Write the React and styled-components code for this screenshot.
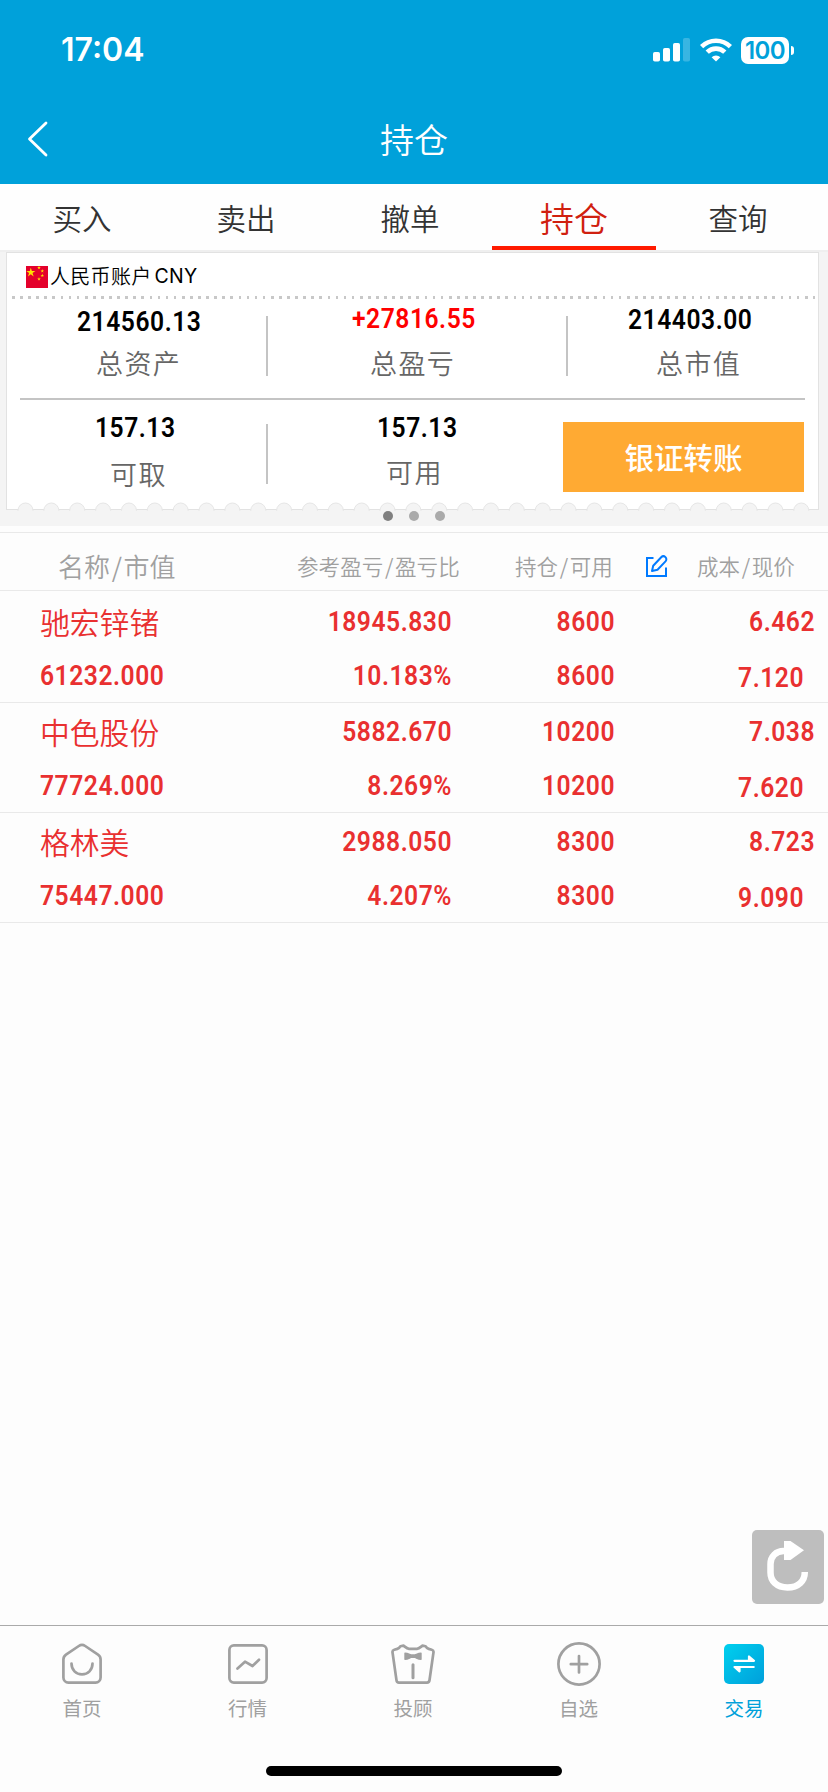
import styled, { createGlobalStyle } from "styled-components";

const tabs = ["买入", "卖出", "撤单", "持仓", "查询"];

const holdings = [
  { name: "驰宏锌锗", marketValue: "61232.000", profit: "18945.830", ratio: "10.183%", held: "8600", usable: "8600", cost: "6.462", price: "7.120" },
  { name: "中色股份", marketValue: "77724.000", profit: "5882.670", ratio: "8.269%", held: "10200", usable: "10200", cost: "7.038", price: "7.620" },
  { name: "格林美", marketValue: "75447.000", profit: "2988.050", ratio: "4.207%", held: "8300", usable: "8300", cost: "8.723", price: "9.090" },
];

const HomeIcon = () => (
  <NavSvg viewBox="0 0 44 44">
    <path d="M3.4 17.5v18.1a5 5 0 0 0 5 5h27.2a5 5 0 0 0 5-5V17.5c0-2-.9-3.8-2.6-4.9L25.2 4a5.6 5.6 0 0 0-6.4 0L6 12.6a6 6 0 0 0-2.6 4.900z" />
    <path d="M11.500 21.500c0 6.500 4.500 10.800 10.500 10.800s10.500-4.300 10.500-10.800" />
  </NavSvg>
);

const QuotesIcon = () => (
  <NavSvg viewBox="0 0 44 44">
    <rect x="3.400" y="3.400" width="37.200" height="37.200" rx="4.500" />
    <path d="M11.500 26.500l7.500-6.800 7.500 4.300 6.500-6.300" />
  </NavSvg>
);

const AdvisorIcon = () => (
  <NavSvg viewBox="0 0 44 44">
    <path d="M12.500 3.600c2.500 2 3.200 3 5.500 3.200h8c2.300-.2 3-1.200 5.500-3.200l3 .6c.8 1.500 1.800 2.300 3.200 2.700l3 .9c1.300.4 2 1.200 1.800 2.500l-4 28c-.2 1.600-1 2.300-2.500 2.300H8c-1.500 0-2.300-.7-2.500-2.300l-4-28C1.300 9 2 8.200 3.300 7.800l3-.9c1.400-.4 2.400-1.200 3.200-2.700z" />
    <path d="M14 11.200c3 .1 4.500 1.400 6 1.800h4c1.500-.4 3-1.700 6-1.800v6c-3-.1-4.500-1.400-6-1.800h-4c-1.500.4-3 1.700-6 1.800z" fill="currentColor" strokeWidth="1.400" />
    <path d="M22 22.800v13" strokeWidth="3" />
  </NavSvg>
);

const WatchIcon = () => (
  <NavSvg viewBox="0 0 44 44">
    <circle cx="22" cy="22" r="20.600" />
    <path d="M22 14v16.400M13.800 22.200h16.400" />
  </NavSvg>
);

const TradeIcon = () => (
  <NavSvg viewBox="0 0 44 44">
    <defs>
      <linearGradient id="trade" x1="0" y1="0" x2="1" y2="1">
        <stop offset="0" stopColor="#00d0ee" />
        <stop offset="1" stopColor="#009fdb" />
      </linearGradient>
    </defs>
    <rect x="2" y="2" width="40" height="40" rx="5" fill="url(#trade)" stroke="none" />
    <path d="M12.500 18.800h19.500l-5-4.300v4M31.700 25h-19.200l5 4.300v-4" stroke="#fff" strokeWidth="2.200" fill="#fff" />
  </NavSvg>
);

const nav = [
  { label: "首页", icon: HomeIcon },
  { label: "行情", icon: QuotesIcon },
  { label: "投顾", icon: AdvisorIcon },
  { label: "自选", icon: WatchIcon },
  { label: "交易", icon: TradeIcon, active: true },
];

const Signal = () => (
  <svg width="38" height="24" viewBox="0 0 38 24" fill="#fff">
    <rect x="0" y="14" width="7" height="9.500" rx="1.800" />
    <rect x="10" y="10" width="7" height="13.500" rx="1.800" />
    <rect x="20" y="5" width="7" height="18.500" rx="1.800" />
    <rect x="30" y="0" width="7" height="23.500" rx="1.800" opacity=".22" />
  </svg>
);

const Wifi = () => (
  <svg width="32" height="24" viewBox="0 0 32 24" fill="none" stroke="#fff" strokeWidth="4.600">
    <path d="M1.600 8.600a20.500 20.500 0 0 1 28.800 0" />
    <path d="M7.200 14.200a12.500 12.500 0 0 1 17.600 0" />
    <path d="M16 23.600l-4.400-4.400a6.300 6.300 0 0 1 8.800 0z" fill="#fff" stroke="none" />
  </svg>
);

const star = "M0-1 .225-.309H.951L.363.118.588.809 0 .382-.588.809-.363.118-.951-.309H-.225z";

const Flag = () => (
  <svg width="22" height="22" viewBox="0 0 22 22" fill="#ffe100">
    <rect width="22" height="22" fill="#e4002b" />
    <path d={star} transform="translate(4.800 6.500) scale(4.800)" />
    <path d={star} transform="translate(13 1.700) scale(1.900)" />
    <path d={star} transform="translate(16.300 5) scale(1.900)" />
    <path d={star} transform="translate(16.300 9.500) scale(1.900)" />
    <path d={star} transform="translate(13 13) scale(1.900)" />
  </svg>
);

const EditIcon = () => (
  <svg width="24" height="24" viewBox="0 0 24 24" fill="none" stroke="#007aff" strokeWidth="2">
    <path d="M9.500 4H3v18h19v-8.500" />
    <path d="M8 17l1.200-5.300 8-8.500a3 3 0 0 1 4.300 4.200l-8 8.300z" strokeLinejoin="round" />
  </svg>
);

// torn paper edge along the bottom of the account card
const Scallops = () => (
  <ScallopSvg width="814" height="9" viewBox="0 0 814 9">
    {Array.from({ length: 31 }, (_, i) => (
      <circle key={i} cx={19.5 + i * 25.86} cy="8.500" r="7.500" />
    ))}
  </ScallopSvg>
);

const Stat = ({ value, label, valueX, labelX, valueY, labelY, color, wide }) => (
  <StatCell $wide={wide}>
    <StatValue $x={valueX} $y={valueY} $color={color}>
      <Num>{value}</Num>
    </StatValue>
    <StatLabel $x={labelX} $y={labelY}>{label}</StatLabel>
  </StatCell>
);

const App = () => (
  <Screen>
    <GlobalStyle />
    <Header>
      <StatusBar>
        <Clock>17:04</Clock>
        <StatusIcons>
          <Signal />
          <Wifi />
          <Battery>100</Battery>
        </StatusIcons>
      </StatusBar>
      <TitleBar>
        <BackButton aria-label="返回">
          <svg width="24" height="38" viewBox="0 0 24 38" fill="none" stroke="#fff" strokeWidth="2.800" strokeLinecap="round" strokeLinejoin="round">
            <path d="M20 3L3.500 19l16.500 16" />
          </svg>
        </BackButton>
        <Title>持仓</Title>
        <span />
      </TitleBar>
    </Header>

    <Tabs>
      {tabs.map(tab => (
        <Tab key={tab} $active={tab === "持仓"}>{tab}</Tab>
      ))}
    </Tabs>

    <Account>
      <Card>
        <AccountName>
          <Flag />
          <span>人民币账户</span>
          <Currency>CNY</Currency>
        </AccountName>
        <Dotted />
        <StatRow>
          <Stat value="214560.13" label="总资产" valueX={70} labelX={89} valueY={9} labelY={12} />
          <Divider />
          <Stat wide value="+27816.55" label="总盈亏" valueX={84} labelX={102} valueY={6} labelY={15} color="#ff0000" />
          <Divider />
          <Stat value="214403.00" label="总市值" valueX={60} labelX={88} valueY={7} labelY={14} />
        </StatRow>
        <Rule />
        <StatRow $short>
          <Stat value="157.13" label="可取" valueX={88} labelX={103} valueY={14} labelY={17} />
          <Divider $short />
          <Stat wide value="157.13" label="可用" valueX={109} labelX={118} valueY={14} labelY={15} />
          <TransferButton>银证转账</TransferButton>
        </StatRow>
      </Card>
      <Scallops />
      <Dots>
        <Dot $active />
        <Dot />
        <Dot />
      </Dots>
    </Account>

    <ListHead>
      <HeadCell $large>名称<i>/</i>市值</HeadCell>
      <HeadCell>参考盈亏<i>/</i>盈亏比</HeadCell>
      <HeadCell>持仓<i>/</i>可用</HeadCell>
      <EditIcon />
      <HeadCell>成本<i>/</i>现价</HeadCell>
    </ListHead>
    <List>
      {holdings.map(h => (
        <Row key={h.name}>
          <Name>{h.name}</Name>
          <Num $right>{h.profit}</Num>
          <Num $right>{h.held}</Num>
          <Num $right>{h.cost}</Num>
          <Num>{h.marketValue}</Num>
          <Num $right>{h.ratio}</Num>
          <Num $right>{h.usable}</Num>
          <Price $right>{h.price}</Price>
        </Row>
      ))}
    </List>

    <Refresh aria-label="刷新">
      <svg width="72" height="74" viewBox="0 0 72 74" fill="none">
        <path d="M33 21h-1.500c-7.500 0-13 5.500-13 13v8.500c0 8.500 6 15 17 15s17.300-6.500 17.300-15.500" stroke="#fff" strokeWidth="6.500" />
        <path d="M32 11h6.500L52 20.300 38.500 30H32z" fill="#fff" />
      </svg>
    </Refresh>

    <Nav>
      {nav.map(({ label, icon: Icon, active }) => (
        <NavItem key={label} $active={active}>
          <Icon />
          <span>{label}</span>
        </NavItem>
      ))}
    </Nav>
    <HomeIndicator />
  </Screen>
);

export default App;

const GlobalStyle = createGlobalStyle`
  * {
    box-sizing: border-box;
  }

  body {
    margin: 0;
    background: #fdfdfd;
    font-family: "Noto Sans CJK SC", sans-serif;
  }

  button {
    border: none;
    padding: 0;
    background: none;
    font-family: inherit;
  }

  svg {
    display: block;
    flex-shrink: 0;
  }
`;

const Screen = styled.div`
  width: 828px;
  height: 1792px;
  display: flex;
  flex-direction: column;
  overflow: hidden;
`;

const Header = styled.header`
  height: 184px;
  background: #00a1da;
  color: #fff;
`;

const StatusBar = styled.div`
  height: 96px;
  padding: 4px 34px 0 61px;
  display: flex;
  align-items: center;
  justify-content: space-between;
`;

const Clock = styled.span`
  font: 600 32px/40px Inter, sans-serif;
`;

const StatusIcons = styled.div`
  display: flex;
  align-items: center;
  gap: 9px;
`;

const Battery = styled.div`
  position: relative;
  width: 48px;
  height: 27px;
  margin-right: 5px;
  border-radius: 7px;
  background: #fff;
  color: #00a1da;
  font: 600 24px/27px Inter, sans-serif;
  letter-spacing: -.6px;
  text-align: center;

  &::after {
    content: "";
    position: absolute;
    top: 9px;
    right: -5px;
    width: 3px;
    height: 9px;
    border-radius: 0 4px 4px 0;
    background: #fff;
  }
`;

const TitleBar = styled.div`
  height: 86px;
  padding: 0 26px;
  display: grid;
  grid-template-columns: 1fr auto 1fr;
  align-items: center;
`;

const BackButton = styled.button`
  justify-self: start;
`;

const Title = styled.h1`
  margin: 0;
  font-size: 34px;
  font-weight: 350;
  line-height: 48px;
`;

const Tabs = styled.nav`
  height: 68px;
  border-bottom: 2px solid #efefef;
  background: #fefefe;
  display: flex;
`;

const Tab = styled.button`
  width: 164px;
  height: 66px;
  padding-top: 5px;
  color: ${props => props.$active ? '#d0200f' : '#333'};
  font-size: ${props => props.$active ? 34 : 29.5}px;
  font-weight: 350;
  line-height: 57px;
  border-bottom: 4px solid ${props => props.$active ? '#ff1a00' : 'transparent'};
`;

const Account = styled.section`
  height: 274px;
  padding-left: 6px;
  background: #f4f4f4;
`;

const Card = styled.div`
  width: 813px;
  height: 258px;
  border: 1px solid #e2e2e2;
  background: #fff;
`;

const AccountName = styled.div`
  height: 43px;
  padding: 4px 19px 0;
  display: flex;
  align-items: center;
  font-size: 20px;
  font-weight: 350;
  line-height: 28px;
  letter-spacing: .3px;

  > span {
    margin: -2px 0 0 2px;
  }
`;

const Currency = styled.b`
  margin: -2px 0 0 3px;
  font: 400 19.5px Inter, sans-serif;
`;

const Dotted = styled.div`
  height: 3px;
  margin: 0 3px 0 5px;
  background: repeating-linear-gradient(90deg, #c8c8c8 0 2.7px, transparent 2.7px 8.09px);
`;

const StatRow = styled.div`
  height: ${props => props.$short ? 108 : 99}px;
  display: flex;
`;

const StatCell = styled.div`
  flex: none;
  width: ${props => props.$wide ? 298 : 259}px;
  white-space: nowrap;
`;

const StatValue = styled.div`
  padding: ${props => props.$y}px 0 0 ${props => props.$x}px;
  color: ${props => props.$color || '#000'};
`;

const StatLabel = styled.div`
  padding: ${props => props.$y}px 0 0 ${props => props.$x}px;
  color: #666;
  font-size: 27px;
  font-weight: 350;
  line-height: 30px;
  letter-spacing: 1.4px;
`;

const Divider = styled.div`
  flex: none;
  width: 2px;
  height: 60px;
  margin-top: ${props => props.$short ? 24 : 17}px;
  background: #c4c4c4;
`;

const Rule = styled.div`
  height: 2px;
  margin: 0 13px;
  background: #c4c4c4;
`;

const TransferButton = styled.button`
  flex: none;
  width: 241px;
  height: 70px;
  padding-bottom: 3px;
  margin: 22px 0 0 -3px;
  background: #ffaa33;
  color: #fff;
  font-size: 29.5px;
  font-weight: 500;
  line-height: 66px;
`;

const ScallopSvg = styled.svg`
  margin-top: -8px;
  fill: #f4f4f4;
  stroke: #e6e6e6;
`;

const Dots = styled.div`
  margin-left: -6px;
  display: flex;
  justify-content: center;
  gap: 16px;
`;

const Dot = styled.span`
  width: 10px;
  height: 10px;
  border-radius: 50%;
  background: ${props => props.$active ? '#808080' : '#aaa'};
`;

const ListHead = styled.div`
  height: 65px;
  padding: 7px 0 0 58px;
  border-bottom: 1px solid #e9e9e9;
  background: linear-gradient(#e9e9e9, #e9e9e9) 0 6px / 100% 1px no-repeat;
  display: grid;
  grid-template-columns: 239px 218px 129px 53px 1fr;
  align-items: center;

  > svg {
    margin-top: 9px;
  }
`;

const HeadCell = styled.span`
  padding-top: 8px;
  font-size: ${props => props.$large ? 26 : 21.5}px;
  font-weight: 350;
  line-height: 30px;
  letter-spacing: .1px;
  white-space: nowrap;
  color: #a0a0a0;

  > i {
    font-style: normal;
    margin: 0 1.5px;
  }
`;

const List = styled.div`
  padding-top: 2px;
`;

const Row = styled.div`
  height: 110px;
  border-bottom: 1px solid #e9e9e9;
  padding: 15px 13px 0 40px;
  display: grid;
  grid-template-columns: 200px 212px 163px 200px;
  grid-template-rows: 28px 26px 28px;
  color: #e93030;

  > :nth-child(n + 5) {
    grid-row: 3;
  }
`;

// digits are drawn slightly condensed
const Num = styled.span`
  display: block;
  font: 600 28px/28px Roboto, sans-serif;
  letter-spacing: .6px;
  transform: scaleX(.88);
  transform-origin: ${props => props.$right ? 'right' : 'left'};
  text-align: ${props => props.$right ? 'right' : 'left'};
`;

const Price = styled(Num)`
  padding-right: 12.500px;
  margin-top: 2px;
`;

const Name = styled.span`
  margin-top: -2px;
  font-size: 29.8px;
  font-weight: 350;
  line-height: 30px;
  white-space: nowrap;
`;

const Refresh = styled.button`
  width: 72px;
  height: 74px;
  margin: auto 4px 21px auto;
  border-radius: 5px;
  background: #bebebe;
`;

const Nav = styled.nav`
  height: 141px;
  border-top: 1px solid #aaa;
  display: flex;
  justify-content: space-between;
  padding: 16px 54px 0 52px;
`;

const NavItem = styled.div`
  width: 60px;
  display: flex;
  flex-direction: column;
  align-items: center;
  color: ${props => props.$active ? '#00a1da' : '#a0a0a0'};
  font-size: 19.5px;
  line-height: 28px;

  > span {
    margin-top: 8px;
  }
`;

const NavSvg = styled.svg`
  width: 44px;
  height: 44px;
  fill: none;
  stroke: currentColor;
  stroke-width: 2.7;
  stroke-linecap: round;
  stroke-linejoin: round;
`;

const HomeIndicator = styled.div`
  width: 296px;
  height: 10px;
  margin: 0 auto 16px;
  border-radius: 5px;
  background: #000;
`;
